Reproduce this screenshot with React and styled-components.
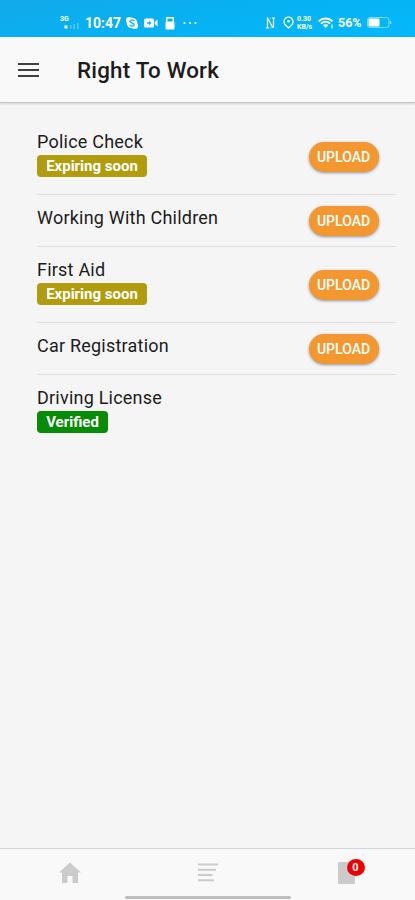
import React from "react";
import styled, { createGlobalStyle } from "styled-components";

const COLORS = {
  sky: "#04b7f8",
  page: "#f5f5f5",
  bar: "#f9f9f9",
  text: "#1c1c1c",
  divider: "#e0e0e0",
  muted: "#cbcbcb",
  orange: "#f39830",
  olive: "#b19c0e",
  green: "#068c06",
  red: "#ee0000",
};

const DOCUMENTS = [
  { name: "Police Check", status: "expiring", upload: true },
  { name: "Working With Children", upload: true },
  { name: "First Aid", status: "expiring", upload: true },
  { name: "Car Registration", upload: true },
  { name: "Driving License", status: "verified" },
];

const STATUSES = {
  expiring: { label: "Expiring soon", color: COLORS.olive, width: 110 },
  verified: { label: "Verified", color: COLORS.green, width: 71 },
};

const App = () => {
  return (
    <Screen>
      <GlobalStyles />
      <StatusBar />
      <Header>
        <MenuButton aria-label="Menu">
          <MenuLine />
          <MenuLine />
          <MenuLine />
        </MenuButton>
        <Title>Right To Work</Title>
      </Header>
      <List>
        {DOCUMENTS.map((doc) => (
          <DocumentRow key={doc.name} {...doc} />
        ))}
      </List>
      <TabBar />
    </Screen>
  );
};

const DocumentRow = ({ name, status, upload }) => {
  const badge = STATUSES[status];

  return (
    <Row $tall={Boolean(badge)} $divided={upload}>
      <RowText>
        <Name>{name}</Name>
        {badge && (
          <Badge $color={badge.color} $width={badge.width}>
            {badge.label}
          </Badge>
        )}
      </RowText>
      {upload && <UploadButton>UPLOAD</UploadButton>}
    </Row>
  );
};

const StatusBar = () => (
  <StatusWrapper>
    <StatusGroup>
      <Network>
        <NetworkLabel>3G</NetworkLabel>
        <svg width="19" height="7" viewBox="0 0 19 7" fill="#fff">
          <rect x="4.5" y="2.5" width="3" height="3" />
          <g opacity="0.3">
            <rect x="10" y="2" width="1.5" height="4" />
            <rect x="13.5" y="1" width="1.5" height="5" />
            <rect x="17" y="0" width="1.5" height="6" />
          </g>
        </svg>
      </Network>
      <Clock>10:47</Clock>
      <svg width="14" height="14" viewBox="0 0 14 14">
        <circle cx="7" cy="7" r="5.3" fill="#fff" />
        <circle cx="4.2" cy="4.2" r="3.2" fill="#fff" />
        <circle cx="9.8" cy="9.8" r="3.2" fill="#fff" />
        <path
          d="M9.4 4.9C8.8 3.4 5 3.4 4.9 5.2 4.8 7.2 9.3 6.5 9.2 8.8 9.1 10.7 5.1 10.6 4.6 8.9"
          fill="none"
          stroke={COLORS.sky}
          strokeWidth="1.3"
        />
      </svg>
      <VideoIcon width="14" height="10" viewBox="0 0 14 10">
        <rect y="0.5" width="10" height="9" rx="1.5" fill="#fff" />
        <path d="M10.7 4L13.5 1.5v7L10.7 6z" fill="#fff" />
        <path d="M3 4.3h2V2.8L7.6 5 5 7.2V5.7H3z" fill={COLORS.sky} />
      </VideoIcon>
      <LockIcon width="10" height="14" viewBox="0 0 10 14">
        <path d="M1.7 6V1.7h6.6V6" fill="none" stroke="#fff" strokeWidth="1.4" strokeLinejoin="round" />
        <rect x="0.5" y="5.5" width="9" height="8" rx="1.2" fill="#fff" />
      </LockIcon>
      <svg width="14" height="4" viewBox="0 0 14 4" fill="#fff">
        <circle cx="1.5" cy="2" r="1.1" />
        <circle cx="7" cy="2" r="1.1" />
        <circle cx="12.5" cy="2" r="1.1" />
      </svg>
    </StatusGroup>
    <StatusGroup>
      <NfcIcon width="9" height="12" viewBox="0 0 9 12" fill="none" stroke="#fff" strokeWidth="1.2">
        <path d="M1.5 11.5V1L6.8 10.500M7.5.5V11M0 11h3M6 1h3" />
        <path d="M3.500 1.200h1.500M4 10.800h1.500" strokeWidth="1" opacity="0.6" />
      </NfcIcon>
      <PinIcon width="11" height="13" viewBox="0 0 11 13">
        <path
          d="M5.5 12L2.2 8.8C-.4 6.2 1.3 1 5.5 1s5.9 5.2 3.3 7.8z"
          fill="none"
          stroke="#fff"
          strokeWidth="1.2"
        />
        <circle cx="5.5" cy="5.3" r="1.3" fill="#fff" />
      </PinIcon>
      <Speed>
        <span>0.30</span>
        <span>KB/s</span>
      </Speed>
      <WifiIcon width="16" height="12" viewBox="0 0 16 12" fill="none" stroke="#fff">
        <path d="M.7 4.2c3.9-3.6 9.9-3.6 13.8 0M3 6.6c2.7-2.4 6.5-2.4 9.2 0" strokeWidth="1.9" />
        <path d="M4.9 8.1c1.5-1.2 3.9-1.2 5.4 0L7.6 11z" fill="#fff" stroke="none" />
        <path d="M14 7.5v4" strokeWidth="1.2" />
      </WifiIcon>
      <Percent>56%</Percent>
      <svg width="25" height="11" viewBox="0 0 25 11">
        <rect x="0.5" y="0.5" width="21.5" height="10" rx="2.5" fill="none" stroke="#7ddcfc" />
        <rect x="1.5" y="1.5" width="11" height="8" rx="1" fill="#fff" />
        <path d="M23.5 4v3" stroke="#7ddcfc" strokeWidth="1.5" />
      </svg>
    </StatusGroup>
  </StatusWrapper>
);

const TabBar = () => (
  <TabWrapper>
    <Tabs>
      <Tab aria-label="Home">
        <svg width="22" height="22" viewBox="0 0 22 22" fill={COLORS.muted}>
          <path d="M11 0.5L0 10.5h3V21h5.5v-7h5v7H19V10.5h3z" />
        </svg>
      </Tab>
      <Tab aria-label="List">
        <svg width="20" height="22" viewBox="0 0 20 22" fill={COLORS.muted}>
          <rect y="1.5" width="20" height="2" />
          <rect y="6.8" width="18" height="2" />
          <rect y="12" width="14.5" height="2" />
          <rect y="17.3" width="16" height="2" />
        </svg>
      </Tab>
      <Tab aria-label="Notifications">
        <DocumentIcon>
          <Counter>0</Counter>
        </DocumentIcon>
      </Tab>
    </Tabs>
    <HomeIndicator />
  </TabWrapper>
);

const GlobalStyles = createGlobalStyle`
  *, *::before, *::after {
    box-sizing: border-box;
  }

  body {
    margin: 0;
    font-family: Roboto, sans-serif;
    color: ${COLORS.text};
    background: ${COLORS.page};
  }

  svg {
    display: block;
    flex-shrink: 0;
  }
`;

const Screen = styled.div`
  display: flex;
  flex-direction: column;
  width: 415px;
  height: 900px;
  overflow: hidden;
  background: ${COLORS.page};
`;

const StatusWrapper = styled.div`
  display: flex;
  justify-content: space-between;
  align-items: center;
  flex-shrink: 0;
  height: 37px;
  padding: 8px 23px 0 60px;
  color: #fff;
  background: linear-gradient(170deg, #14a9e9 0%, #08b0f1 40%, #03b9fb 100%);
`;

const StatusGroup = styled.div`
  display: flex;
  align-items: center;
`;

const Network = styled.div`
  width: 19px;
  margin-right: 6px;
`;

const NetworkLabel = styled.div`
  font-size: 7px;
  font-weight: 700;
  line-height: 7px;
`;

const Clock = styled.div`
  width: 35px;
  margin-right: 5px;
  font-size: 14px;
  font-weight: 700;
  line-height: 16px;
  white-space: nowrap;
`;

const VideoIcon = styled.svg`
  margin-left: 5px;
`;

const LockIcon = styled.svg`
  margin: 0 8px 0 7px;
`;

const NfcIcon = styled.svg`
  margin-right: 8px;
`;

const PinIcon = styled.svg`
  margin-right: 3px;
`;

const Speed = styled.div`
  display: flex;
  flex-direction: column;
  width: 16px;
  margin-right: 5px;
  font-size: 7px;
  font-weight: 700;
  line-height: 8px;
  white-space: nowrap;
`;

const WifiIcon = styled.svg`
  margin-right: 4px;
`;

const Percent = styled.div`
  width: 24px;
  margin-right: 5px;
  font-size: 12.5px;
  font-weight: 700;
  line-height: 14px;
  white-space: nowrap;
`;

const Header = styled.header`
  display: flex;
  align-items: center;
  flex-shrink: 0;
  height: 66px;
  padding-left: 18px;
  background: ${COLORS.bar};
  border-bottom: 1px solid #c6c6c6;
  box-shadow: 0 1px 2px rgba(0, 0, 0, 0.14);
`;

const MenuButton = styled.button`
  display: flex;
  flex-direction: column;
  gap: 4px;
  width: 21px;
  margin-right: 38px;
  padding: 0;
  border: none;
  background: transparent;
`;

const MenuLine = styled.span`
  height: 2px;
  background: #404040;
`;

const Title = styled.h1`
  margin: 0;
  font-size: 22.4px;
  font-weight: 500;
  line-height: 28px;
  letter-spacing: 0.2px;
`;

const List = styled.ul`
  flex: 1;
  margin: 0;
  padding: 16px 19px 0 37px;
  list-style: none;
`;

const Row = styled.li`
  display: flex;
  justify-content: space-between;
  align-items: center;
  height: ${(p) => (p.$tall ? 76 : 52)}px;
  padding-right: 17.5px;
  border-bottom: ${(p) => (p.$divided ? `1px solid ${COLORS.divider}` : "none")};
`;

const RowText = styled.div`
  align-self: flex-start;
  padding-top: 11px;
`;

const Name = styled.div`
  font-size: 18px;
  line-height: 24px;
  letter-spacing: 0.22px;
  white-space: nowrap;
`;

const Badge = styled.div`
  width: ${(p) => p.$width}px;
  height: 22px;
  margin-top: 1px;
  border-radius: 4px;
  color: #fff;
  background: ${(p) => p.$color};
  font-size: 15px;
  font-weight: 700;
  line-height: 22px;
  text-align: center;
  white-space: nowrap;
`;

const UploadButton = styled.button`
  width: 70px;
  height: 30px;
  margin-top: 1px;
  padding: 0;
  border: none;
  border-radius: 15px;
  color: #fff;
  background: ${COLORS.orange};
  box-shadow: 0 1px 3px rgba(0, 0, 0, 0.4);
  font-family: inherit;
  font-size: 14px;
  font-weight: 500;
  line-height: 29px;
`;

const TabWrapper = styled.footer`
  flex-shrink: 0;
  height: 52px;
  border-top: 1px solid #d4d4d4;
  background: ${COLORS.bar};
`;

const Tabs = styled.nav`
  display: grid;
  grid-template-columns: repeat(3, 1fr);
  height: 47px;
  padding-left: 1px;
`;

const Tab = styled.a`
  display: flex;
  justify-content: center;
  align-items: center;
`;

const DocumentIcon = styled.div`
  position: relative;
  width: 17px;
  height: 22px;
  border-radius: 1px;
  background: ${COLORS.muted};
`;

const Counter = styled.span`
  position: absolute;
  top: -3px;
  left: 9px;
  width: 18px;
  height: 17px;
  border-radius: 50%;
  color: #fff;
  background: ${COLORS.red};
  font-size: 11px;
  font-weight: 700;
  line-height: 17px;
  text-align: center;
`;

const HomeIndicator = styled.div`
  width: 166px;
  height: 3px;
  margin: 0 auto;
  border-radius: 2px;
  background: #bdbdbd;
`;

export default App;
